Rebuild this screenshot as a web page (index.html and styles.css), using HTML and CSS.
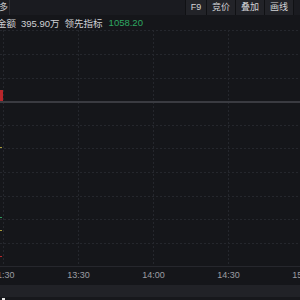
FILE: index.html
```html
<!DOCTYPE html>
<html>
<head>
  <link rel="stylesheet" href="styles.css">
</head>
<body>
  <div class="panel">
    <!-- top toolbar -->
    <div class="toolbar">
      <div class="tab"><span>更多</span></div>
      <div class="tools">
        <div class="tool">F9</div>
        <div class="tool">竞价</div>
        <div class="tool">叠加</div>
        <div class="tool">画线</div>
      </div>
    </div>

    <!-- indicator values -->
    <div class="info">
      <span class="label">金额</span>
      <span>395.90万</span>
      <span class="label">领先指标</span>
      <span class="up">1058.20</span>
    </div>

    <!-- chart grid -->
    <div class="chart">
      <svg width="300" height="237" viewBox="0 0 300 237">
        <g stroke="#25272d" stroke-width="1" stroke-dasharray="2 2">
          <line x1="0" y1="0.5" x2="300" y2="0.5"/>
          <line x1="0" y1="24.5" x2="300" y2="24.5"/>
          <line x1="0" y1="48.5" x2="300" y2="48.5"/>
          <line x1="0" y1="95.5" x2="300" y2="95.5"/>
          <line x1="0" y1="118.5" x2="300" y2="118.5"/>
          <line x1="0" y1="142.5" x2="300" y2="142.5"/>
          <line x1="0" y1="166.5" x2="300" y2="166.5"/>
          <line x1="0" y1="189.5" x2="300" y2="189.5"/>
          <line x1="0" y1="213.5" x2="300" y2="213.5"/>
          <line x1="3.5" y1="0" x2="3.5" y2="237"/>
          <line x1="78.5" y1="0" x2="78.5" y2="237"/>
          <line x1="153.5" y1="0" x2="153.5" y2="237"/>
          <line x1="228.5" y1="0" x2="228.5" y2="237"/>
        </g>
        <line x1="0" y1="236.5" x2="300" y2="236.5" stroke="#26272d"/>
        <rect x="0" y="71" width="300" height="2" fill="#3a3b41"/>
        <rect x="0" y="60" width="3" height="11" fill="#b8262b"/>
        <rect x="0" y="117" width="2" height="1" fill="#a89a3a"/>
        <rect x="0" y="187" width="2" height="1" fill="#2f9a5c"/>
        <rect x="0" y="200" width="2" height="1" fill="#a89a3a"/>
        <rect x="0" y="226" width="2" height="1" fill="#b8262b"/>
      </svg>
    </div>

    <!-- time axis -->
    <div class="axis">
      <span>11:30</span>
      <span>13:30</span>
      <span>14:00</span>
      <span>14:30</span>
      <span>15:00</span>
    </div>

    <div class="footer"></div>
    <div class="bottom"><span class="mark"></span></div>
  </div>
</body>
</html>
```

FILE: styles.css
```css
body {
  margin: 0;
  background-color: #15161a;
  font-family: "Liberation Sans", "Noto Sans CJK SC", sans-serif;
  color: #c9cace;
  overflow: hidden;
}

.panel {
  width: 300px;
  height: 300px;
  display: flex;
  flex-direction: column;
  overflow: hidden;
}

.toolbar {
  height: 15px;
  display: flex;
  justify-content: space-between;
  background-color: #1a1b20;
  font-size: 9px;
  line-height: 15px;
}

.tab {
  width: 9px;
  overflow: hidden;
  border-right: 1px solid #2c2d33;
  display: flex;
  justify-content: flex-end;
}

.tab span {
  white-space: nowrap;
  margin-right: 1px;
}

.tools {
  display: flex;
  margin-right: 6px;
  background-color: #101114;
  gap: 1px;
  padding: 0 1px;
}

.tool {
  width: 28px;
  text-align: center;
  background-color: #222328;
  color: #d2d3d7;
}

.tool:first-child {
  width: 20px;
}

.info {
  height: 15px;
  display: flex;
  align-items: center;
  gap: 5px;
  margin-left: -3px;
  font-size: 9.5px;
  white-space: nowrap;
  color: #d0d1d5;
}

.up {
  color: #2ea862;
  margin-left: 1px;
}

.chart {
  height: 237px;
}

.chart svg {
  display: block;
}

.axis {
  height: 18px;
  display: flex;
  margin-left: -34px;
  font-size: 9px;
  line-height: 16px;
  color: #9c9da3;
}

.axis span {
  flex: 0 0 75px;
  text-align: center;
}

.footer {
  height: 12px;
  background-color: #212227;
}

.bottom {
  height: 3px;
  background-color: #17181c;
  position: relative;
}

.mark {
  position: absolute;
  left: 2px;
  top: 1px;
  width: 3px;
  height: 2px;
  background-color: #e8e8e8;
}
```
